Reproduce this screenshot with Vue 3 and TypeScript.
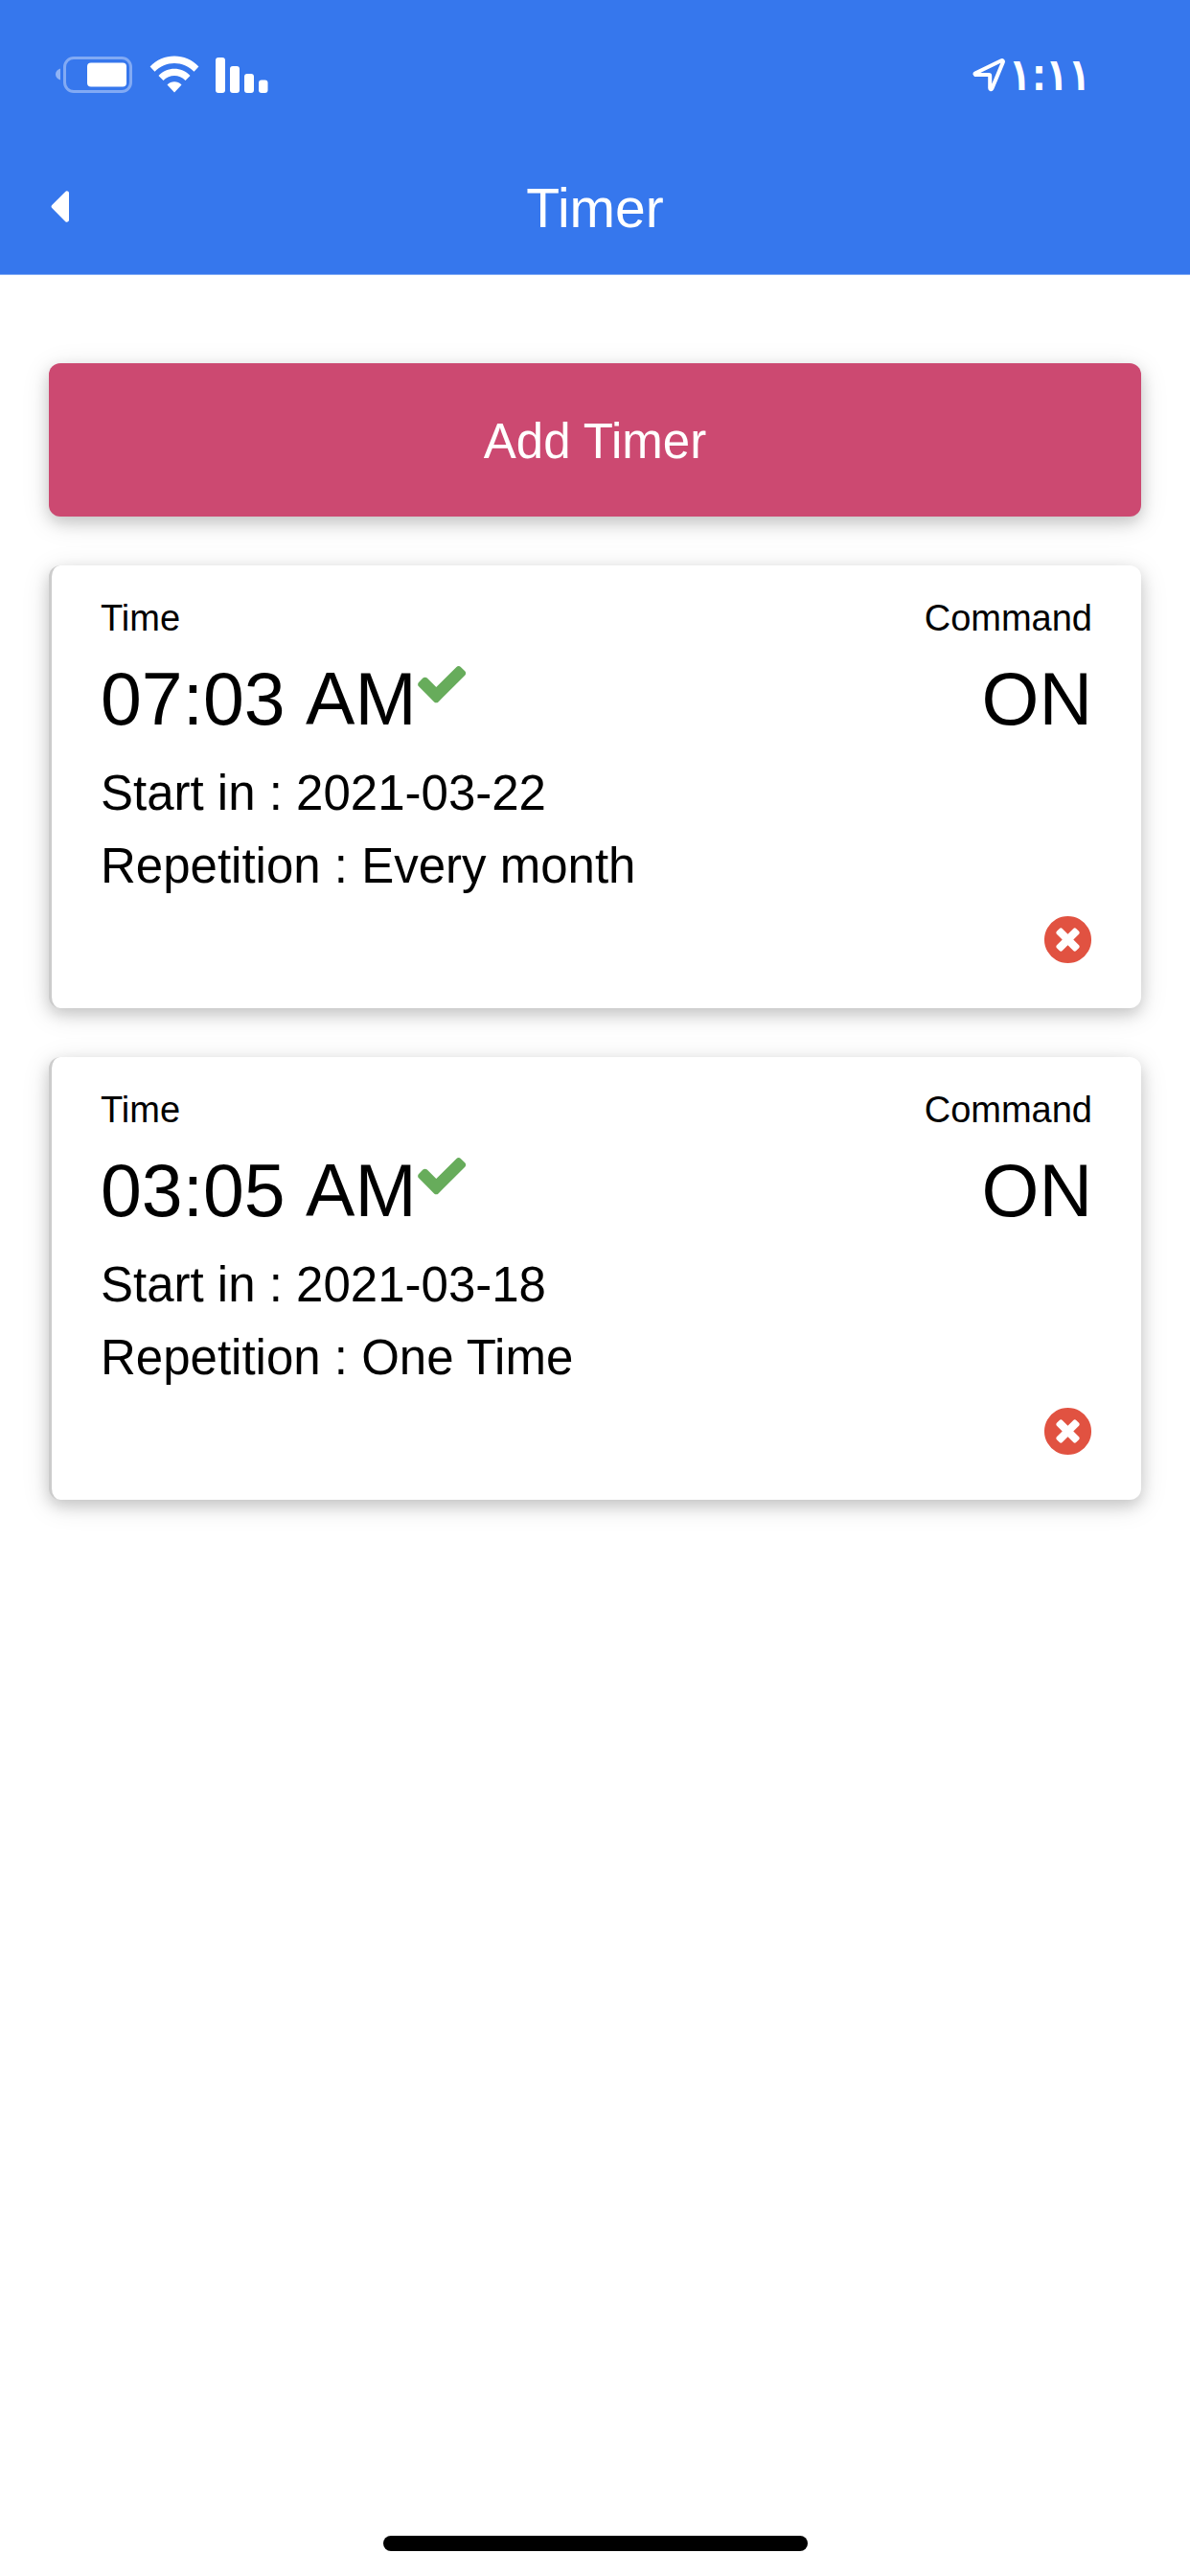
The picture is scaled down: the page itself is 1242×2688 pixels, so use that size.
<script setup lang="ts">
import { ref } from 'vue'

interface Timer {
  id: number
  time: string
  command: string
  start: string
  repetition: string
}

const timers = ref<Timer[]>([
  { id: 1, time: '07:03 AM', command: 'ON', start: '2021-03-22', repetition: 'Every month' },
  { id: 2, time: '03:05 AM', command: 'ON', start: '2021-03-18', repetition: 'One Time' },
])

function removeTimer(id: number): void {
  timers.value = timers.value.filter((t) => t.id !== id)
}
</script>

<template>
  <div class="screen">
    <header class="header">
      <div class="status">
        <div class="status-icons">
          <svg width="80" height="40" viewBox="0 0 80 40" aria-label="Battery">
            <path d="M5 13.5v12C2 24.500 0 22.500 0 19.500s2-5 5-6z" fill="#fff" opacity=".45" />
            <rect x="9.500" y="2.500" width="69" height="35" rx="9.500" fill="none" stroke="#fff" stroke-width="3" opacity=".38" />
            <rect x="33" y="7.500" width="41" height="25" rx="4" fill="#fff" />
          </svg>
          <svg class="wifi" width="52" height="40" viewBox="0 0 52 40" aria-label="Wi-Fi">
            <path d="M0.600 11.500C14-3.200 38-3.200 51.400 11.500L46.500 16.700C35.500 5 16.500 5 5.500 16.700z" fill="#fff" />
            <path d="M9.500 21C18.500 11.300 33.500 11.300 42.500 21L37.500 26C31 19.300 21 19.300 14.500 26z" fill="#fff" />
            <path d="M18.500 30.400C22.800 26.200 29.200 26.200 33.500 30.400L26 38.500z" fill="#fff" />
          </svg>
          <svg class="signal" width="55" height="40" viewBox="0 0 55 40" aria-label="Signal">
            <g fill="#fff">
              <rect x="0" y="2" width="10" height="37" rx="3" />
              <rect x="15" y="11" width="10" height="28" rx="3" />
              <rect x="30" y="19" width="10" height="20" rx="3" />
              <rect x="45" y="25.500" width="9.500" height="13.500" rx="3" />
            </g>
          </svg>
        </div>
        <div class="status-time">
          <svg width="34" height="36" viewBox="0 0 34 36" aria-label="Location">
            <path d="M2.200 16.200L29 3.200c1.300-.6 2.300.4 1.800 1.700L19.300 32.500c-.6 1.300-2.100 1-2.100-.4V19.300c0-.8-.4-1.200-1.200-1.200H2.700c-1.400 0-1.700-1.300-.5-1.900z" fill="none" stroke="#fff" stroke-width="4" stroke-linejoin="round" />
          </svg>
          <time class="clock">١:١١</time>
        </div>
      </div>
      <nav class="nav">
        <button class="back" type="button" aria-label="Back">
          <svg width="21" height="57" viewBox="0 18 192 512">
            <path fill="#fff" d="M192 127.338v257.324c0 17.818-21.543 26.741-34.142 14.142L29.196 270.142c-7.810-7.810-7.810-20.474 0-28.284l128.662-128.662c12.599-12.600 34.142-3.676 34.142 14.142z" />
          </svg>
        </button>
        <h1 class="title">Timer</h1>
      </nav>
    </header>

    <main class="content">
      <button class="add" type="button">Add Timer</button>

      <article v-for="t in timers" :key="t.id" class="card">
        <div class="row labels">
          <span>Time</span>
          <span>Command</span>
        </div>
        <div class="row values">
          <span class="when">
            <span>{{ t.time }}</span>
            <svg class="check" width="51" height="51" viewBox="86 148 1581 1581" aria-label="Enabled">
              <path fill="#67ac5b" d="M1671 566q0 40-28 68l-724 724-136 136q-28 28-68 28t-68-28l-136-136-362-362q-28-28-28-68t28-68l136-136q28-28 68-28t68 28l294 295 656-657q28-28 68-28t68 28l136 136q28 28 28 68z" />
            </svg>
          </span>
          <span>{{ t.command }}</span>
        </div>
        <p class="line">Start in : {{ t.start }}</p>
        <p class="line">Repetition : {{ t.repetition }}</p>
        <div class="actions">
          <button class="remove" type="button" aria-label="Delete timer" @click="removeTimer(t.id)">
            <svg width="51" height="51" viewBox="98 98 1596 1596">
              <path fill="#e15241" d="M1277 1122q0-26-19-45l-181-181 181-181q19-19 19-45 0-27-19-46l-90-90q-19-19-46-19-26 0-45 19l-181 181-181-181q-19-19-45-19-27 0-46 19l-90 90q-19 19-19 46 0 26 19 45l181 181-181 181q-19 19-19 45 0 27 19 46l90 90q19 19 46 19 26 0 45-19l181-181 181 181q19 19 45 19 27 0 46-19l90-90q19-19 19-46zm387-226q0 209-103 385.500t-279.500 279.500-385.500 103-385.500-103-279.500-279.500-103-385.500 103-385.500 279.500-279.500 385.500-103 385.500 103 279.500 279.500 103 385.500z" />
            </svg>
          </button>
        </div>
      </article>
    </main>

    <div class="home-indicator"></div>
  </div>
</template>

<style>
body {
  margin: 0;
  background: #fff;
}
</style>

<style scoped>
.screen {
  display: flex;
  flex-direction: column;
  min-height: 100vh;
  box-sizing: border-box;
  padding-bottom: 26px;
  background: #fff;
  color: #000;
  font-family: "Liberation Sans", Arial, Helvetica, sans-serif;
}

svg {
  display: block;
  flex: none;
  overflow: visible;
}

button {
  border: 0;
  margin: 0;
  padding: 0;
  background: none;
  font: inherit;
  cursor: pointer;
}

.header {
  background: #3677ed;
  color: #fff;
  border-bottom: 1px solid #7fa9f4;
}

.status {
  display: flex;
  align-items: center;
  justify-content: space-between;
  box-sizing: border-box;
  height: 148px;
  padding: 8px 103px 0 58px;
}

.status-icons,
.status-time {
  display: flex;
  align-items: center;
}

.wifi {
  margin-left: 18px;
}

.signal {
  margin-left: 17px;
}

.status-time {
  gap: 3px;
}

.clock {
  font-family: "DejaVu Sans", sans-serif;
  font-size: 44px;
  line-height: 52px;
  -webkit-text-stroke: 2px #fff;
}

.nav {
  display: grid;
  grid-template-columns: 1fr auto 1fr;
  align-items: center;
  height: 138px;
  padding: 0 51px;
}

.back {
  justify-self: start;
}

.title {
  margin: 0;
  font-size: 57px;
  line-height: 76px;
  font-weight: 400;
}

.content {
  display: flex;
  flex-direction: column;
  gap: 51px;
  padding: 92px 51px 51px;
}

.add,
.card {
  border-radius: 12px;
  box-shadow: 0 6px 15px rgba(0, 0, 0, 0.16), 0 6px 30px rgba(0, 0, 0, 0.12);
}

.add {
  height: 160px;
  padding-top: 3px;
  background: #cc4971;
  color: #fff;
  font-size: 51px;
}

.card {
  padding: 26px 51px 33px;
  border-left: 3px solid #ccc;
  background: #fff;
}

.row {
  display: flex;
  justify-content: space-between;
}

.labels {
  font-size: 38px;
  line-height: 58px;
}

.values {
  padding-bottom: 6px;
  font-size: 77px;
  line-height: 110px;
  font-kerning: none;
}

.when {
  display: flex;
}

.check {
  margin-top: 15px;
}

.line {
  margin: 0;
  font-size: 51px;
  line-height: 76px;
}

.actions {
  display: flex;
  align-items: center;
  justify-content: flex-end;
  height: 77px;
}

.home-indicator {
  width: 443px;
  max-width: 60%;
  height: 16px;
  margin: auto auto 0;
  border-radius: 8px;
  background: #000;
}
</style>
